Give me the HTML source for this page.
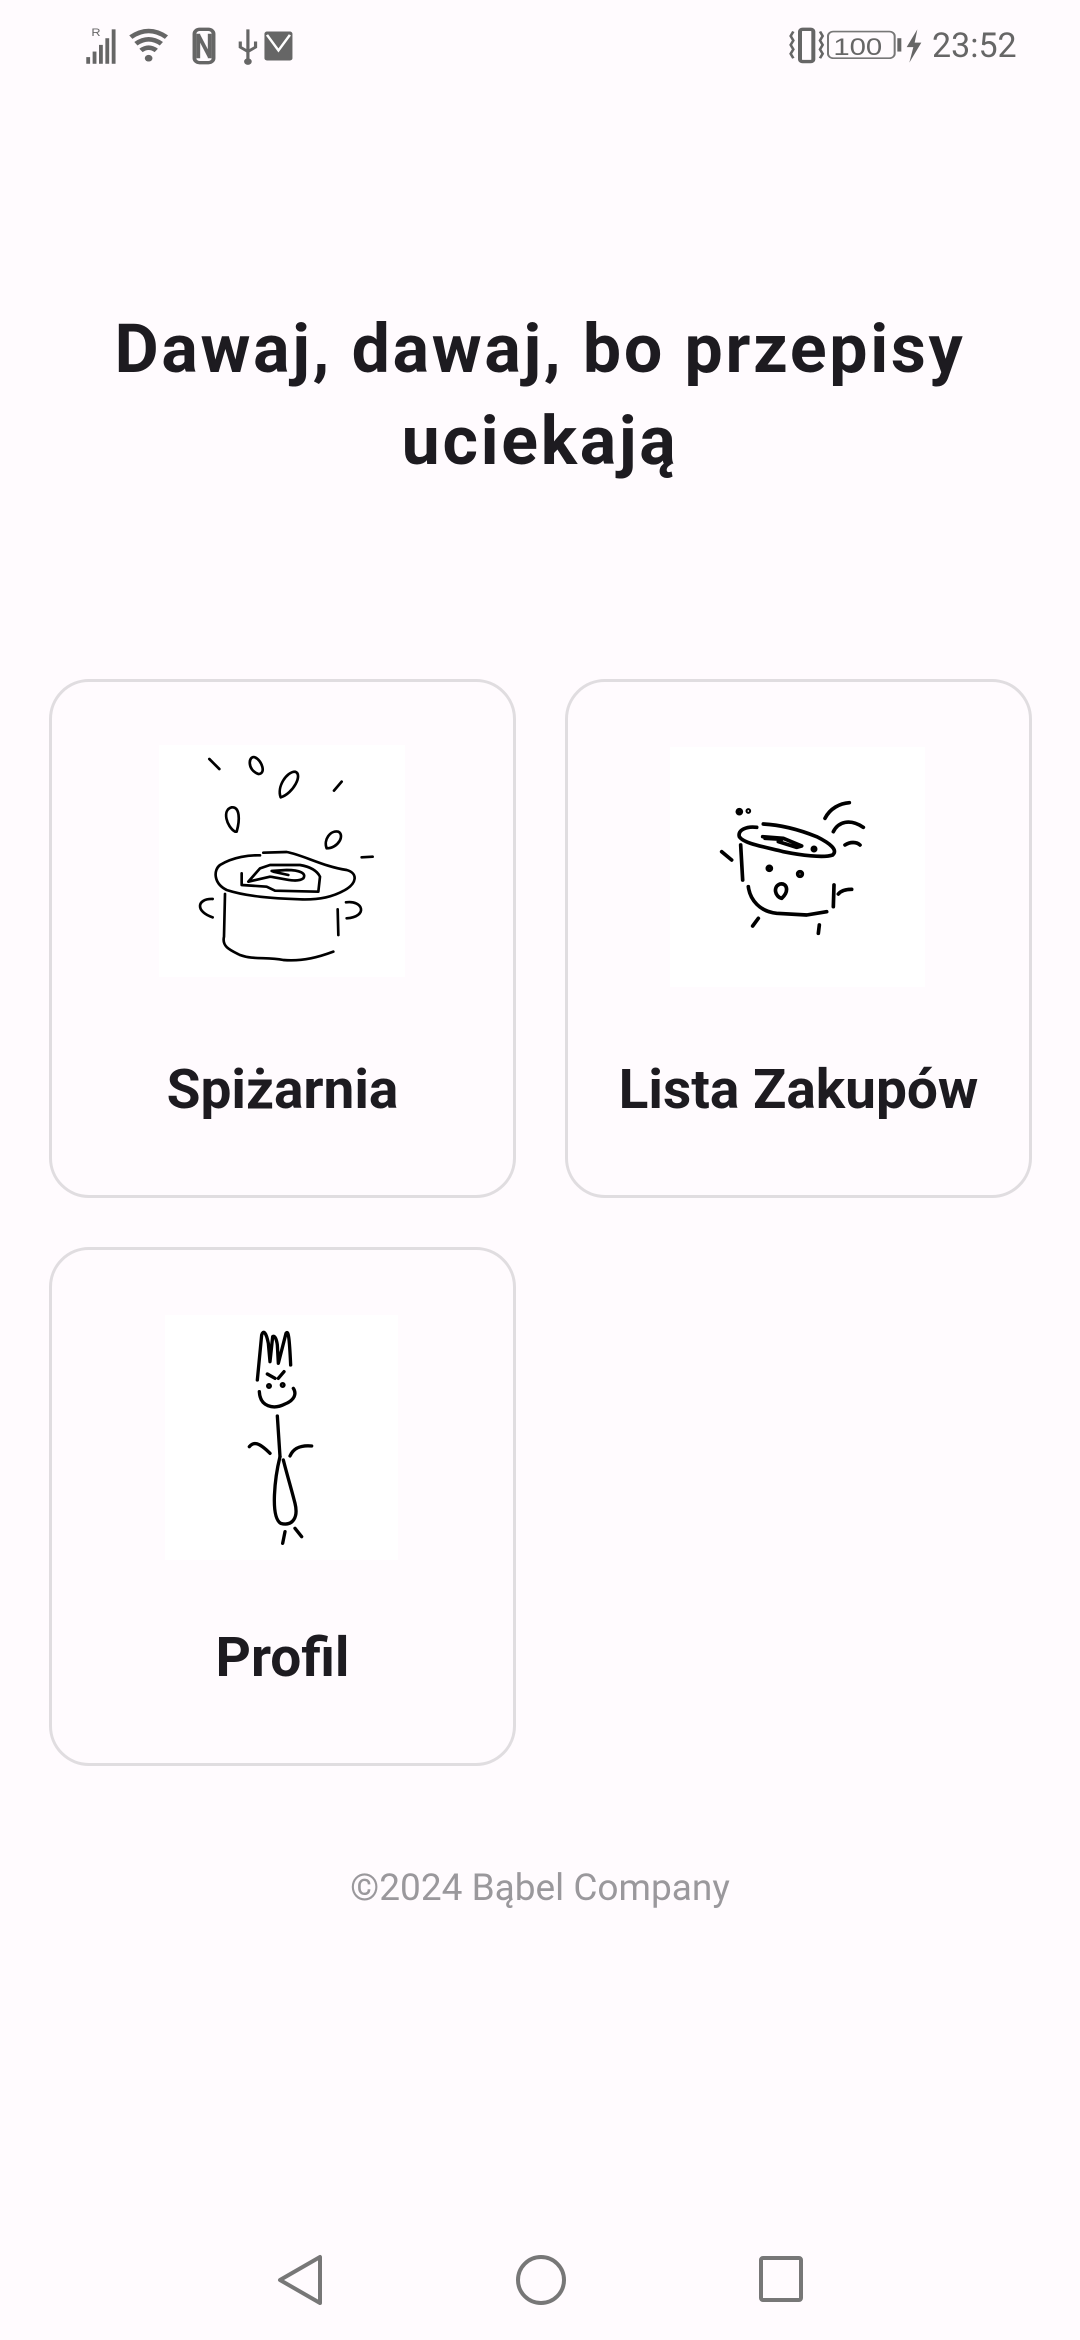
<!DOCTYPE html>
<html><head><meta charset="utf-8"><style>
*{margin:0;padding:0;box-sizing:border-box}
body{width:1080px;height:2340px;background:#fffbfe;font-family:"Roboto","Liberation Sans",sans-serif;position:relative;overflow:hidden;color:#1d1b20}
.abs{position:absolute}
.card{position:absolute;border:3px solid #e0dde0;border-radius:40px;background:#fffbfe}
.img{position:absolute;background:#fff}
.lbl{position:absolute;width:100%;text-align:center;font-weight:bold;font-size:55px;color:#1d1b20}
h1{position:absolute;top:303px;left:0;width:1080px;text-align:center;font-size:68px;line-height:92px;font-weight:bold;letter-spacing:2.7px;color:#1d1b20}
.foot{position:absolute;top:1867px;width:1080px;text-align:center;font-size:37px;color:#9a989c}
.st{position:absolute;top:26px;font-size:34px;color:#666}
svg.d{position:absolute;fill:none;stroke:#000;stroke-linecap:round;stroke-linejoin:round}
</style></head><body>
<!-- status bar -->
<svg class="abs" style="left:85px;top:26px" width="210" height="40" viewBox="0 0 165 36" preserveAspectRatio="none" fill="#666">
<text x="5" y="9" font-size="10" fill="#666" font-family="Liberation Sans">R</text>
<rect x="1" y="28" width="3" height="6"/><rect x="6" y="23" width="3" height="11"/><rect x="11" y="17" width="3" height="17"/><rect x="16" y="11" width="3" height="23"/><rect x="21" y="3" width="3" height="31"/>
<path d="M36 10 Q50 -1 64 10 M40 16 Q50 8 60 16 M44 22 Q50 17 56 22" stroke="#666" stroke-width="4" fill="none"/><circle cx="50" cy="29" r="3"/>
<rect x="86" y="3" width="15" height="30" rx="4" fill="none" stroke="#666" stroke-width="3"/><path d="M89 7 v22 M98 7 v22 M89 8 L98 28" stroke="#666" stroke-width="3"/>
<path d="M128 3 v30 M122 14 v5 l6 4 l6 -4 v-5" stroke="#666" stroke-width="2.5" fill="none"/><circle cx="128" cy="32" r="3"/>
<rect x="141" y="5" width="22" height="26" rx="2"/><path d="M143 8 L152 22 L161 8" stroke="#fff" stroke-width="2" fill="none"/>
</svg>
<svg class="abs" style="left:788px;top:26px" width="136" height="40" viewBox="0 0 102 36" preserveAspectRatio="none">
<rect x="9" y="3" width="10" height="29" rx="2" fill="none" stroke="#666" stroke-width="3"/>
<path d="M4 5 l-2 4 l2 4 l-2 4 l2 4 l-2 4 l2 4 M24 5 l2 4 l-2 4 l2 4 l-2 4 l2 4 l-2 4" stroke="#666" stroke-width="2" fill="none"/>
<rect x="30" y="5" width="50" height="24" rx="4" fill="none" stroke="#777" stroke-width="1.5"/>
<text x="34" y="26" font-size="22" fill="#666" font-family="Liberation Sans">100</text>
<rect x="82" y="11" width="3" height="12" fill="#666"/>
<path d="M97 3 L89 19 h5 l-3 14 l9 -18 h-5 z" fill="#666"/>
</svg>
<div class="st" style="left:932px;font-size:34px">23:52</div>

<h1>Dawaj, dawaj, bo przepisy<br>uciekają</h1>

<div class="card" style="left:49px;top:679px;width:467px;height:519px"></div>
<div class="img" style="left:159px;top:745px;width:246px;height:232px"></div>
<div class="abs" style="left:49px;top:1058px;width:467px"><div class="lbl">Spiżarnia</div></div>
<svg class="d" style="left:40px;top:670px" width="500" height="540" viewBox="0 0 1500 1620" stroke-width="8">
<path d="M508 267 L538 297"/><path d="M655 312 C620 300 625 255 645 262 C665 270 680 312 655 312Z"/>
<path d="M722 382 C710 350 740 305 765 305 C790 312 760 370 722 382Z"/><path d="M882 362 L905 335"/>
<path d="M585 485 C560 470 545 420 575 412 C600 410 600 450 590 485Z"/><path d="M860 535 C850 510 870 480 895 485 C915 495 895 535 860 535Z"/>
<path d="M965 562 L998 560"/>
<path d="M670 548 L740 546 C790 555 850 590 920 600 C955 610 950 640 915 660 C880 680 840 690 780 688 C700 685 620 680 560 660 C520 640 520 600 540 585 C580 560 630 555 660 556"/>
<path d="M605 610 L605 645 L680 650 L705 662 L835 665 L840 620 C830 600 810 590 780 585 L690 585 L660 595 L625 635 L690 620 C730 625 770 640 790 625 C800 610 780 600 740 600 L695 603 M700 605 L745 615"/>
<path d="M555 672 L552 800 C545 830 570 840 600 855 C640 870 680 860 730 870 C790 875 840 860 880 845"/>
<path d="M893 718 L895 795"/><path d="M518 687 C470 685 465 725 518 742"/><path d="M918 697 C970 690 985 740 920 745"/>
</svg>

<div class="card" style="left:565px;top:679px;width:467px;height:519px"></div>
<div class="img" style="left:670px;top:747px;width:255px;height:240px"></div>
<div class="abs" style="left:565px;top:1058px;width:467px"><div class="lbl">Lista Zakupów</div></div>
<svg class="d" style="left:650px;top:740px" width="280" height="250" viewBox="0 0 840 750" stroke-width="11">
<circle cx="268" cy="215" r="6"/><circle cx="295" cy="213" r="3"/>
<path d="M320 262 C290 258 262 270 268 290 C280 310 340 320 400 335 C450 345 520 355 548 345 C565 330 540 310 500 290 C450 270 400 255 340 252"/>
<path d="M338 290 L400 295 L455 318 L440 322 L385 305 M345 295 L395 298"/><circle cx="492" cy="327" r="5"/>
<path d="M272 315 L278 420 M295 440 C300 480 330 515 380 520 L470 525 L530 515"/>
<circle cx="358" cy="385" r="6"/><circle cx="450" cy="402" r="7"/>
<path d="M395 475 C375 470 368 440 390 432 C412 428 418 455 395 475Z"/>
<path d="M215 335 L245 360"/><path d="M308 558 L325 535"/><path d="M505 580 L508 555"/>
<path d="M552 435 L550 500 M565 462 C575 450 590 448 605 448"/>
<path d="M525 235 C540 205 570 190 598 188 M550 275 C565 245 600 235 640 262 M585 315 C600 305 620 305 630 315"/>
</svg>

<div class="card" style="left:49px;top:1247px;width:467px;height:519px"></div>
<div class="img" style="left:165px;top:1315px;width:233px;height:245px"></div>
<div class="abs" style="left:49px;top:1626px;width:467px"><div class="lbl">Profil</div></div>
<svg class="d" style="left:160px;top:1310px" width="250" height="260" viewBox="0 0 750 780" stroke-width="10">
<path d="M292 210 L305 75 C310 60 318 65 325 100 L330 155 L338 80 C345 75 350 90 352 105 L355 160 L378 70 C385 60 388 80 392 165"/>
<path d="M322 192 L345 205 M355 205 L372 185"/><circle cx="327" cy="228" r="4"/><circle cx="368" cy="225" r="4"/>
<path d="M298 245 C300 290 340 300 375 282 C405 270 410 250 400 235"/>
<path d="M352 318 L360 440"/><path d="M268 410 C280 395 295 395 330 430 M390 438 C400 415 420 405 455 408"/>
<path d="M360 440 C345 500 330 620 362 640 C400 650 415 620 405 580 C395 540 380 490 370 450"/>
<path d="M368 700 L375 665 M405 655 L425 680"/>
</svg>

<div class="foot">©2024 Bąbel Company</div>

<!-- nav -->
<svg class="abs" style="left:270px;top:2250px" width="560" height="60" viewBox="0 0 560 60" fill="none" stroke="#777" stroke-width="4">
<path d="M50 7 L50 53 L10 30 Z" stroke-linejoin="round"/>
<circle cx="271" cy="30" r="23"/>
<rect x="491" y="8" width="40" height="42" rx="2"/>
</svg>
</body></html>
